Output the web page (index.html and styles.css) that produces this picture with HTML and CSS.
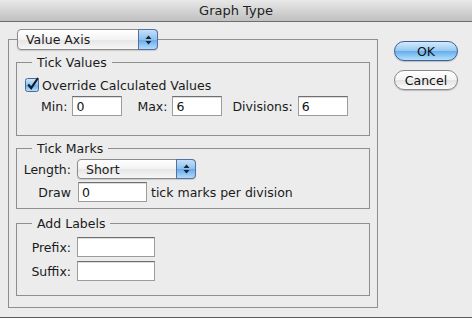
FILE: index.html
```html
<!DOCTYPE html>
<html lang="en">
<head>
    <meta charset="UTF-8">
    <title>Graph Type</title>
    <link rel="stylesheet" href="styles.css">
</head>
<body>
    <div class="window">
        <div class="titlebar">Graph Type</div>

        <div class="content">
            <fieldset class="axis-box">
                <legend>
                    <div class="popup popup-axis">
                        <span class="popup-label">Value Axis</span>
                        <span class="popup-arrows">
                            <svg width="7" height="10" viewBox="0 0 7 10"><polygon points="0.5,4 3.5,0.5 6.5,4" fill="#1c2330"/><polygon points="0.5,6 6.5,6 3.5,9.5" fill="#1c2330"/></svg>
                        </span>
                    </div>
                </legend>

                <!-- Tick values -->
                <fieldset class="group group-values">
                    <legend>Tick Values</legend>
                    <label class="check-row">
                        <span class="checkbox">
                            <svg width="15" height="15" viewBox="0 0 15 15">
                                <defs>
                                    <linearGradient id="cb" x1="0" y1="0" x2="0" y2="1">
                                        <stop offset="0" stop-color="#d3e9fc"/>
                                        <stop offset="0.5" stop-color="#8ec4f2"/>
                                        <stop offset="0.55" stop-color="#6eb0ee"/>
                                        <stop offset="1" stop-color="#bfe4fc"/>
                                    </linearGradient>
                                </defs>
                                <rect x="0.5" y="1.5" width="13" height="13" rx="2" fill="url(#cb)" stroke="#4b6a98"/>
                                <path d="M3.2 7.5 L6.2 11.2 L13 1" fill="none" stroke="#141c28" stroke-width="2.2"/>
                            </svg>
                        </span>
                        Override Calculated Values
                    </label>
                    <div class="value-row">
                        <span class="value-label label-min">Min:</span>
                        <input class="field field-value" type="text" value="0">
                        <span class="value-label label-max">Max:</span>
                        <input class="field field-value" type="text" value="6">
                        <span class="value-label label-div">Divisions:</span>
                        <input class="field field-value" type="text" value="6">
                    </div>
                </fieldset>

                <!-- Tick marks -->
                <fieldset class="group group-marks">
                    <legend>Tick Marks</legend>
                    <div class="form-row">
                        <span class="row-label">Length:</span>
                        <div class="popup popup-length">
                            <span class="popup-label">Short</span>
                            <span class="popup-arrows">
                                <svg width="7" height="10" viewBox="0 0 7 10"><polygon points="0.5,4 3.5,0.5 6.5,4" fill="#1c2330"/><polygon points="0.5,6 6.5,6 3.5,9.5" fill="#1c2330"/></svg>
                            </span>
                        </div>
                    </div>
                    <div class="form-row row-draw">
                        <span class="row-label">Draw</span>
                        <input class="field field-draw" type="text" value="0">
                        <span class="row-suffix">tick marks per division</span>
                    </div>
                </fieldset>

                <!-- Labels -->
                <fieldset class="group group-labels">
                    <legend>Add Labels</legend>
                    <div class="form-row">
                        <span class="row-label">Prefix:</span>
                        <input class="field field-text" type="text" value="">
                    </div>
                    <div class="form-row row-suffix-field">
                        <span class="row-label">Suffix:</span>
                        <input class="field field-text" type="text" value="">
                    </div>
                </fieldset>
            </fieldset>

            <div class="buttons">
                <button type="button" class="btn btn-default">OK</button>
                <button type="button" class="btn">Cancel</button>
            </div>
        </div>
    </div>
</body>
</html>
```

FILE: styles.css
```css
* {
    margin: 0;
    padding: 0;
    box-sizing: border-box;
}

body {
    width: 472px;
    height: 318px;
    overflow: hidden;
    background-color: #ececec;
    font-family: "DejaVu Sans", sans-serif;
    font-size: 12.5px;
    color: #1a1a1a;
}

.window {
    height: 318px;
    border-bottom: 1px solid #5a5a5a;
}

.titlebar {
    height: 22px;
    line-height: 21px;
    text-align: center;
    font-size: 13px;
    color: #222;
    background: linear-gradient(#e8e8e8, #c0c0c0);
    border-bottom: 1px solid #6e6e6e;
}

.content {
    display: flex;
    padding: 7px 0 0 8px;
}

/* group boxes */
fieldset {
    border: 1px solid #8e8e8e;
    min-width: 0;
}

.axis-box {
    width: 370px;
    padding: 4px 7px 11px 7px;
}

.axis-box > legend {
    margin-left: 1px;
    padding: 0;
}

.group {
    padding: 0 6px;
}

.group > legend {
    margin-left: 9px;
    padding: 0 5px;
    line-height: 17px;
    font-size: 12.5px;
}

.group-values {
    padding-top: 6px;
    padding-bottom: 19px;
}

.group-marks {
    margin-top: 4px;
    padding-top: 2px;
    padding-bottom: 6px;
}

.group-labels {
    margin-top: 6px;
    padding-top: 5px;
    padding-bottom: 14px;
}

/* popup menus */
.popup {
    display: flex;
    height: 21px;
    border: 1px solid #8b8b8b;
    border-radius: 4px;
    background: linear-gradient(#ffffff, #f3f3f3 50%, #e6e6e6 52%, #f6f6f6);
    box-shadow: 0 1px 1px rgba(0, 0, 0, 0.15);
}

.popup-axis {
    width: 141px;
}

.popup-length {
    width: 119px;
    height: 20px;
}

.popup-label {
    flex: 1;
    padding-left: 8px;
    line-height: 19px;
}

.popup-arrows {
    width: 20px;
    display: flex;
    align-items: center;
    justify-content: center;
    margin: -1px -1px -1px 0;
    border: 1px solid #55709c;
    border-radius: 0 4px 4px 0;
    background: linear-gradient(#c4e0f9, #8cc1f0 50%, #66aaec 52%, #b3dcfb);
}

/* checkbox row */
.check-row {
    display: flex;
    align-items: center;
    height: 16px;
    margin-left: 2px;
}

.checkbox {
    display: flex;
    margin-right: 2px;
    margin-top: -2px;
}

/* text fields */
.field {
    height: 20px;
    padding: 0 3px;
    border: 1px solid #9c9c9c;
    border-top-color: #6f6f6f;
    background-color: #fff;
    box-shadow: inset 0 1px 0 #dcdcdc;
    font-family: "DejaVu Sans", sans-serif;
    font-size: 12.5px;
    color: #111;
    outline: none;
}

.field-value {
    width: 50px;
}

.field-draw {
    width: 69px;
}

.field-text {
    width: 78px;
}

.value-row {
    display: flex;
    align-items: center;
    margin-top: 3px;
}

.value-label {
    margin-right: 5px;
}

.label-min {
    margin-left: 18px;
}

.label-max {
    margin-left: 15px;
}

.label-div {
    margin-left: 10px;
}

.form-row {
    display: flex;
    align-items: center;
}

.row-label {
    width: 48px;
    margin-right: 6px;
    text-align: right;
}

.row-draw {
    margin-top: 3px;
}

.row-draw .field {
    margin-left: 1px;
}

.row-suffix {
    margin-left: 4px;
}

.row-suffix-field {
    margin-top: 4px;
}

/* buttons */
.buttons {
    display: flex;
    flex-direction: column;
    gap: 9px;
    margin: 12px 0 0 16px;
}

.btn {
    width: 64px;
    height: 20px;
    border: 1px solid #8a8a8a;
    border-radius: 10px;
    background: linear-gradient(#ffffff, #f4f4f4 50%, #e4e4e4 52%, #fbfbfb);
    box-shadow: 0 1px 1px rgba(0, 0, 0, 0.2);
    font-family: "DejaVu Sans", sans-serif;
    font-size: 12.5px;
    color: #111;
}

.btn-default {
    border-color: #3f5f98;
    background: linear-gradient(#d3eafc, #94c8f3 50%, #68adec 52%, #b2e0fd);
}
```
